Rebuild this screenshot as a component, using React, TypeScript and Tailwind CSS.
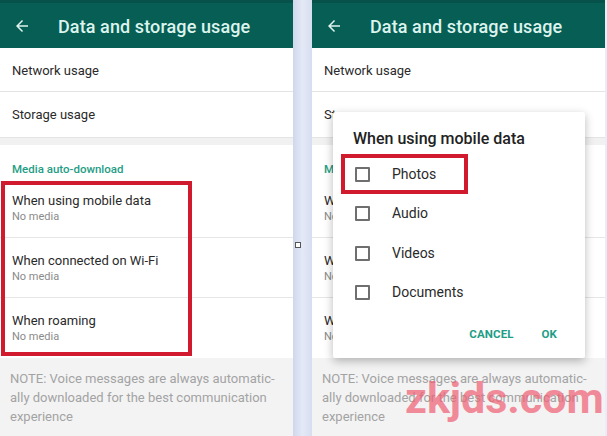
import React from "react";

const Arrow = () => (
  <svg width="18" height="18" viewBox="0 0 24 24" fill="#dff3ee">
    <path d="M20 11H7.83l5.59-5.59L12 4l-8 8 8 8 1.41-1.41L7.83 13H20v-2z" />
  </svg>
);

const Row = ({ title, last }: { title: string; last?: boolean }) => (
  <div className={`h-[60px] flex flex-col justify-center pl-3 ${last ? "" : "border-b border-[#e6e6e6]"}`}>
    <div className="text-[13px] leading-[17px] text-[#2a2a2a]">{title}</div>
    <div className="text-[11px] leading-[15px] text-[#8a8a8a]">No media</div>
  </div>
);

const Panel = () => (
  <div className="w-[293px] h-full flex flex-col bg-white">
    <div className="h-[48px] shrink-0 bg-[#075e54] border-t-[3px] border-[#06524a] flex items-center pl-[13px] pt-[1px]">
      <Arrow />
      <div className="ml-[27px] text-[18px] font-medium text-[#dcf4ee] tracking-[0.1px]">Data and storage usage</div>
    </div>
    <div className="h-[44px] flex items-center pl-3 pt-[2px] border-b border-[#e4e4e4] text-[13px] text-[#2a2a2a]">Network usage</div>
    <div className="h-[45px] flex items-center pl-3 pt-[1px] text-[13px] text-[#2a2a2a]">Storage usage</div>
    <div className="h-[8px] bg-[#f1f1f1] border-t border-[#e4e4e4]" />
    <div className="h-[33px] flex items-end pl-3 text-[11.5px] font-medium text-[#1f9d85]">Media auto-download</div>
    <Row title="When using mobile data" />
    <Row title="When connected on Wi-Fi" />
    <Row title="When roaming" last />
    <div className="flex-1 bg-[#f3f3f4] px-[10px] pt-[11px] text-[13px] leading-[19px] text-[#a3a3a3]">
      NOTE: Voice messages are always automatic-
      <br />
      ally downloaded for the best communication
      <br />
      experience
    </div>
  </div>
);

const Check = ({ label }: { label: string }) => (
  <div className="h-[39.3px] flex items-center">
    <div className="ml-[22px] w-[15px] h-[15px] border-2 border-[#6f6f6f] rounded-[1px]" />
    <div className="ml-[22px] text-[14px] text-[#2a2a2a]">{label}</div>
  </div>
);

export default function App() {
  return (
    <div
      className="relative w-[607px] h-[436px] flex overflow-hidden bg-white"
      style={{ fontFamily: "Roboto, 'Liberation Sans', sans-serif" }}
    >
      <div className="relative">
        <Panel />
        <div className="absolute left-[1px] top-[181px] w-[191px] h-[175px] border-[4px] border-[#d11a2d]" />
      </div>
      <div className="relative w-[19px] h-full bg-gradient-to-r from-[#cfd8ec] via-[#e4e9f6] to-[#d6def0]">
        <div className="absolute left-[2px] top-[242px] w-[6px] h-[6px] border border-[#555] bg-white" />
      </div>
      <div className="relative">
        <Panel />
        <div className="absolute left-[21px] top-[112px] w-[252px] h-[246px] bg-white shadow-[0_3px_10px_rgba(0,0,0,0.28)] rounded-[2px] flex flex-col">
          <div className="pl-[20px] pt-[15px] h-[43px] text-[16px] font-medium text-[#222]">When using mobile data</div>
          <Check label="Photos" />
          <Check label="Audio" />
          <Check label="Videos" />
          <Check label="Documents" />
          <div className="flex justify-end items-center gap-[28px] pr-[28px] mt-[14px] text-[11.5px] font-bold text-[#1f9d85] tracking-[0.1px]">
            <span>CANCEL</span>
            <span>OK</span>
          </div>
          <div className="absolute left-[8px] top-[42px] w-[127px] h-[40px] border-[4px] border-[#d11a2d]" />
        </div>
      </div>
      <div className="w-[2px] h-full bg-[#e8eef8]" />
      <div className="absolute left-[405px] top-[377px] text-[43px] font-bold text-[#ef5f72] opacity-70 leading-none">
        zkjds.com
      </div>
    </div>
  );
}
